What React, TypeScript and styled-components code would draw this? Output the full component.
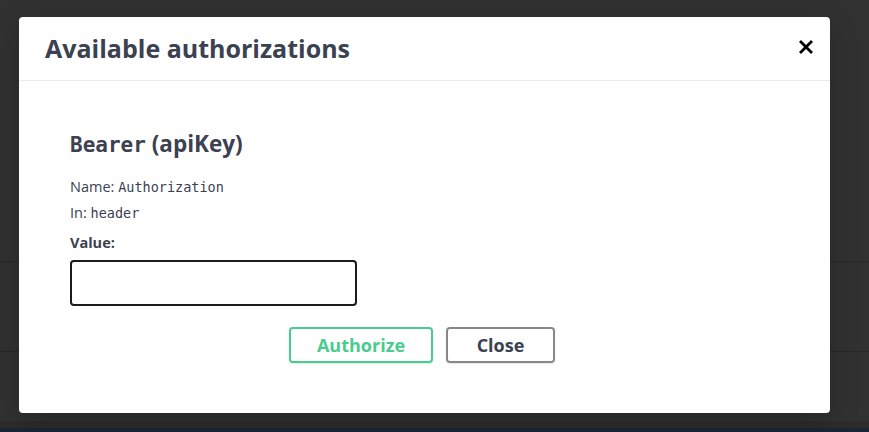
import React from 'react';
import styled, { createGlobalStyle } from 'styled-components';

const GlobalStyle = createGlobalStyle`
    html, body {
        margin: 0;
        padding: 0;
        background: #313131;
        overflow: hidden;
    }
    * {
        box-sizing: border-box;
    }
`;

const Page = styled.div`
    position: relative;
    width: 869px;
    height: 432px;
    display: flex;
    flex-direction: column;
    background: #313131;
`;

const BackdropRow = styled.div<{ $height: number }>`
    height: ${({ $height }) => $height}px;
    border-bottom: 1px solid #272727;
    flex-shrink: 0;
`;

const BackdropFooter = styled.div`
    flex: 1;
    border-top: 5px solid #2c2c2c;
    background: #1c2633;
`;

const Modal = styled.div`
    position: absolute;
    top: 17px;
    left: 19px;
    width: 811px;
    height: 396px;
    background: #fff;
    border-radius: 4px;
    box-shadow: 0 10px 30px 0 rgba(0, 0, 0, 0.2);
    display: flex;
    flex-direction: column;
    font-family: "Open Sans", sans-serif;
    color: #3b4151;
`;

const ModalHeader = styled.div`
    height: 64px;
    display: flex;
    align-items: center;
    justify-content: space-between;
    padding: 0 14px 0 26px;
    border-bottom: 1px solid #ebebeb;
`;

const ModalTitle = styled.h3`
    margin: 0;
    font-size: 25px;
    font-weight: 700;
    color: #3b4151;
    padding-bottom: 2px;
`;

const CloseIcon = styled.button`
    border: none;
    background: none;
    padding: 0;
    width: 20px;
    height: 20px;
    display: flex;
    align-items: center;
    justify-content: center;
    cursor: pointer;
    margin-bottom: 4px;
`;

const ModalBody = styled.div`
    flex: 1;
    padding: 48px 51px 0;
    display: flex;
    flex-direction: column;
`;

const SchemeTitle = styled.h4`
    margin: 0 0 14px;
    font-size: 22.5px;
    font-weight: 700;
    color: #3b4151;
    line-height: 30px;
`;

const Code = styled.code<{ $size: number; $bold?: boolean }>`
    font-family: "DejaVu Sans Mono", monospace;
    font-size: ${({ $size }) => $size}px;
    font-weight: ${({ $bold }) => ($bold ? 700 : 400)};
`;

const InfoLine = styled.div`
    font-size: 14.5px;
    line-height: 26px;
    color: #3b4151;
`;

const ValueLabel = styled.label`
    display: block;
    margin-top: 7px;
    font-size: 14.5px;
    font-weight: 700;
    line-height: 20px;
`;

const ValueInput = styled.input`
    display: block;
    margin-top: 7px;
    width: 287px;
    height: 46px;
    border: 2px solid #1b1b1b;
    border-radius: 4px;
    background: #fff;
    outline: none;
    font-size: 14px;
    padding: 0 10px;
`;

const ButtonRow = styled.div`
    display: flex;
    justify-content: center;
    gap: 13px;
    margin-top: 21px;
    padding-right: 5px;
`;

const ActionButton = styled.button<{ $variant: 'authorize' | 'close' }>`
    height: 36px;
    min-width: ${({ $variant }) => ($variant === 'authorize' ? 144 : 109)}px;
    border-radius: 4px;
    background: transparent;
    font-family: "Open Sans", sans-serif;
    font-size: 18px;
    font-weight: 700;
    border: 2px solid ${({ $variant }) => ($variant === 'authorize' ? '#49cc90' : '#888888')};
    color: ${({ $variant }) => ($variant === 'authorize' ? '#49cc90' : '#3b4151')};
    box-shadow: 0 1px 2px rgba(0, 0, 0, 0.1);
    cursor: pointer;
`;

export default function App() {
    return (
        <>
            <GlobalStyle />
            <Page>
                <BackdropRow $height={262} />
                <BackdropRow $height={90} />
                <BackdropRow $height={71} />
                <BackdropFooter />
                <Modal>
                    <ModalHeader>
                        <ModalTitle>Available authorizations</ModalTitle>
                        <CloseIcon aria-label="Close">
                            <svg width="14" height="14" viewBox="0 0 14 14">
                                <path d="M2 2 L12 12 M12 2 L2 12" stroke="#000" strokeWidth="2.8" strokeLinecap="square" />
                            </svg>
                        </CloseIcon>
                    </ModalHeader>
                    <ModalBody>
                        <SchemeTitle>
                            <Code $size={21} $bold>Bearer</Code> (apiKey)
                        </SchemeTitle>
                        <InfoLine>
                            Name: <Code $size={13.5}>Authorization</Code>
                        </InfoLine>
                        <InfoLine>
                            In: <Code $size={13.5}>header</Code>
                        </InfoLine>
                        <ValueLabel>Value:</ValueLabel>
                        <ValueInput type="text" />
                        <ButtonRow>
                            <ActionButton $variant="authorize">Authorize</ActionButton>
                            <ActionButton $variant="close">Close</ActionButton>
                        </ButtonRow>
                    </ModalBody>
                </Modal>
            </Page>
        </>
    );
}
